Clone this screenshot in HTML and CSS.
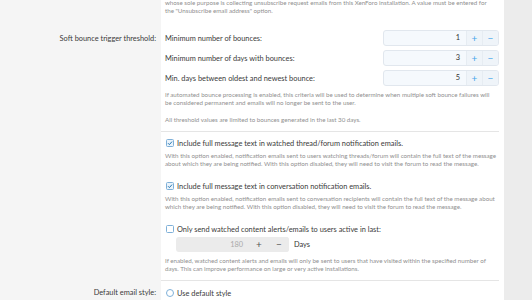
FILE: index.html
```html
<!DOCTYPE html>
<html lang="en">
  <head>
    <meta charset="UTF-8" />
    <title>Email options</title>
    <link rel="stylesheet" href="styles.css">
  </head>
  <body>
    <div class="form">
      <div class="row row-top">
        <div class="row-label"></div>
        <div class="row-input">
          <p class="hint">
            whose sole purpose is collecting unsubscribe request emails from this XenForo installation. A value must be entered for<br />
            the "Unsubscribe email address" option.
          </p>
        </div>
      </div>

      <div class="row row-bounce">
        <div class="row-label"><span class="label-text">Soft bounce trigger threshold:</span></div>
        <div class="row-input">
          <div class="spin-row">
            <span class="spin-label">Minimum number of bounces:</span>
            <div class="spin">
              <span class="spin-value">1</span>
              <span class="spin-btn">+</span>
              <span class="spin-btn">&minus;</span>
            </div>
          </div>
          <div class="spin-row">
            <span class="spin-label">Minimum number of days with bounces:</span>
            <div class="spin">
              <span class="spin-value">3</span>
              <span class="spin-btn">+</span>
              <span class="spin-btn">&minus;</span>
            </div>
          </div>
          <div class="spin-row">
            <span class="spin-label">Min. days between oldest and newest bounce:</span>
            <div class="spin">
              <span class="spin-value">5</span>
              <span class="spin-btn">+</span>
              <span class="spin-btn">&minus;</span>
            </div>
          </div>
          <p class="hint hint-after">
            If automated bounce processing is enabled, this criteria will be used to determine when multiple soft bounce failures will<br />
            be considered permanent and emails will no longer be sent to the user.
          </p>
          <p class="hint hint-gap">All threshold values are limited to bounces generated in the last 30 days.</p>
          <div class="sep"></div>
        </div>
      </div>

      <div class="row">
        <div class="row-label"></div>
        <div class="row-input">
          <label class="check">
            <svg class="box" width="8" height="8" viewBox="0 0 8 8">
              <rect x="0.5" y="0.5" width="7" height="7" rx="1" fill="#eaf3fb" stroke="#7fb0d8" />
              <path d="M2 4.2 L3.4 5.6 L6 2.6" fill="none" stroke="#2577b1" stroke-width="1" />
            </svg>
            Include full message text in watched thread/forum notification emails.
          </label>
          <p class="hint hint-check">
            With this option enabled, notification emails sent to users watching threads/forum will contain the full text of the message<br />
            about which they are being notified. With this option disabled, they will need to visit the forum to read the message.
          </p>

          <label class="check check-next">
            <svg class="box" width="8" height="8" viewBox="0 0 8 8">
              <rect x="0.5" y="0.5" width="7" height="7" rx="1" fill="#eaf3fb" stroke="#7fb0d8" />
              <path d="M2 4.2 L3.4 5.6 L6 2.6" fill="none" stroke="#2577b1" stroke-width="1" />
            </svg>
            Include full message text in conversation notification emails.
          </label>
          <p class="hint hint-check">
            With this option enabled, notification emails sent to conversation recipients will contain the full text of the message about<br />
            which they are being notified. With this option disabled, they will need to visit the forum to read the message.
          </p>

          <label class="check check-next">
            <svg class="box" width="8" height="8" viewBox="0 0 8 8">
              <rect x="0.5" y="0.5" width="7" height="7" rx="1" fill="#ffffff" stroke="#7fb0d8" />
            </svg>
            Only send watched content alerts/emails to users active in last:
          </label>
          <div class="days">
            <div class="spin spin-off">
              <span class="spin-value">180</span>
              <span class="spin-btn">+</span>
              <span class="spin-btn">&minus;</span>
            </div>
            <span class="days-unit">Days</span>
          </div>
          <p class="hint hint-days">
            If enabled, watched content alerts and emails will only be sent to users that have visited within the specified number of<br />
            days. This can improve performance on large or very active installations.
          </p>
          <div class="sep"></div>
        </div>
      </div>

      <div class="row row-style">
        <div class="row-label"><span class="label-text">Default email style:</span></div>
        <div class="row-input">
          <label class="check">
            <svg class="box" width="8" height="8" viewBox="0 0 8 8">
              <circle cx="4" cy="4" r="3.5" fill="#ffffff" stroke="#7fb0d8" />
            </svg>
            Use default style
          </label>
        </div>
      </div>
    </div>
  </body>
</html>
```

FILE: styles.css
```css
* {
  margin: 0;
  box-sizing: border-box;
}
body {
  margin: 0;
  background-color: #ececec;
  font-family: Lato, "Noto Sans", sans-serif;
  color: #3a3a3a;
  overflow: hidden;
}
.form {
  width: 504px;
}
.row {
  display: flex;
}
.row-label {
  width: 161px;
  flex-shrink: 0;
  background-color: #f5f5f5;
  text-align: right;
  padding-right: 5px;
  font-size: 7.4px;
  line-height: 10px;
}
.row-input {
  flex: 1;
  background-color: #fff;
  padding: 0 5px 0 4px;
  font-size: 7.4px;
}
.hint {
  font-size: 6.2px;
  line-height: 8px;
  color: #8f8f8f;
  white-space: nowrap;
}
.row-top .hint {
  margin-top: -1px;
}
.row-bounce .row-label {
  padding-top: 19px;
}
.row-bounce .row-input {
  padding-top: 11px;
}
.spin-row {
  display: flex;
  align-items: center;
  justify-content: space-between;
  margin-top: 4px;
}
.spin {
  display: flex;
  width: 116px;
  height: 16px;
  border: 1px solid #e1e7ee;
  border-radius: 3px;
  background-color: #f5f9fd;
  overflow: hidden;
}
.spin-value {
  flex: 1;
  text-align: right;
  line-height: 14px;
  padding-right: 6px;
  color: #333;
}
.spin-btn {
  width: 16px;
  text-align: center;
  line-height: 14px;
  font-size: 10px;
  color: #47a7eb;
  background-color: #eff4f9;
  border-left: 1px solid #e6ecf2;
}
.hint-after {
  margin-top: 5px;
}
.hint-gap {
  margin-top: 9px;
}
.sep {
  border-bottom: 1px solid #e5e5e5;
  margin: 7px 0 0 -4px;
}
.check {
  display: flex;
  align-items: center;
  gap: 3px;
  height: 12px;
  margin-top: 5px;
  padding-left: 1px;
}
.check-next {
  margin-top: 12px;
}
.hint-check {
  margin-top: 3px;
}
.days {
  display: flex;
  align-items: center;
  gap: 5px;
  margin: 2px 0 0 11px;
}
.spin-off {
  border: 0;
  height: 15px;
  width: 113px;
  background-color: #ebebeb;
}
.spin-off .spin-value {
  color: #aaa;
  line-height: 15px;
}
.spin-off .spin-btn {
  width: 20px;
  color: #555;
  background-color: #ebebeb;
  border-left: 0;
  line-height: 15px;
}
.days-unit {
  color: #333;
}
.hint-days {
  margin-top: 5px;
}
.row-style .row-label {
  padding-top: 7px;
}
.row-style .row-input {
  padding-bottom: 8px;
}
.row-style .check {
  margin-top: 6px;
}
```
